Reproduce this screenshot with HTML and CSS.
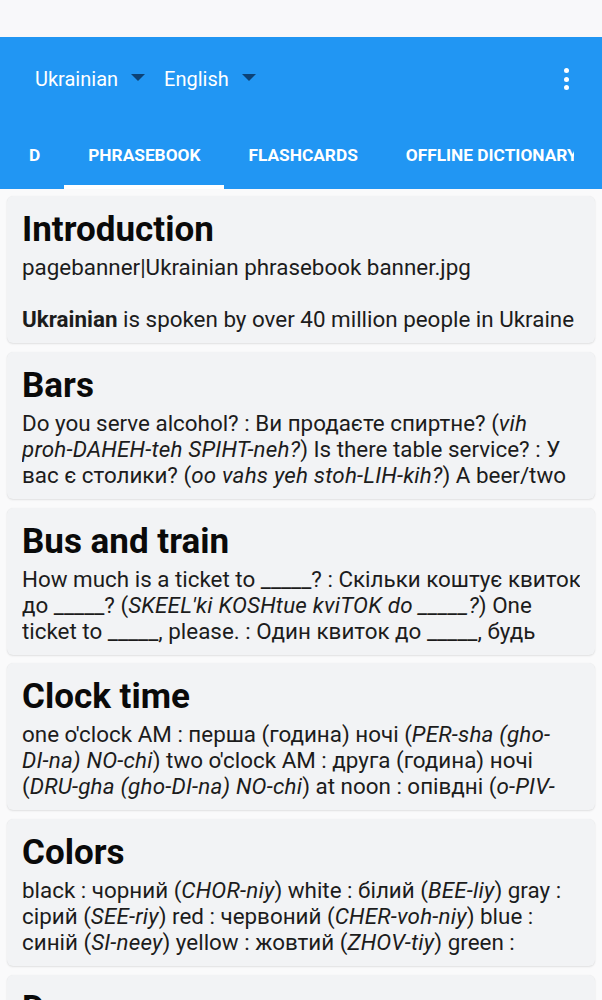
FILE: index.html
```html
<!DOCTYPE html>
<html lang="en">
<head>
<meta charset="utf-8">
<title>Ukrainian Phrasebook</title>
<link rel="stylesheet" href="styles.css">
</head>
<body>
<div class="status"></div>
<header class="appbar">
  <div class="toolbar">
    <div class="spinner"><span>Ukrainian</span><i class="caret"></i></div>
    <div class="spinner"><span>English</span><i class="caret"></i></div>
    <div class="grow"></div>
    <div class="overflow" aria-label="More options"><b></b><b></b><b></b></div>
  </div>
  <nav class="tabs">
    <div class="tab">D</div>
    <div class="tab active">PHRASEBOOK</div>
    <div class="tab">FLASHCARDS</div>
    <div class="tab">OFFLINE DICTIONARY</div>
  </nav>
</header>
<main class="list">
  <section class="card">
    <h2 class="title">Introduction</h2>
    <div class="body">pagebanner|Ukrainian phrasebook banner.jpg<br><br><b>Ukrainian</b> is spoken by over 40 million people in Ukraine<br>and by large communities around the world.</div>
  </section>
  <section class="card">
    <h2 class="title">Bars</h2>
    <div class="body">Do you serve alcohol? : Ви продаєте спиртне? (<i>vih</i><br><i>proh-DAHEH-teh SPIHT-neh?</i>) Is there table service? : У<br>вас є столики? (<i>oo vahs yeh stoh-LIH-kih?</i>) A beer/two<br>beers, please. : Пиво/два пива, будь ласка.</div>
  </section>
  <section class="card">
    <h2 class="title">Bus and train</h2>
    <div class="body">How much is a ticket to _____? : Скільки коштує квиток<br>до _____? (<i>SKEEL'ki KOSHtue kviTOK do _____?</i>) One<br>ticket to _____, please. : Один квиток до _____, будь<br>ласка. (<i>oDIN kviTOK do _____, bud' LASka</i>)</div>
  </section>
  <section class="card">
    <h2 class="title">Clock time</h2>
    <div class="body">one o'clock AM : перша (година) ночі (<i>PER-sha (gho-</i><br><i>DI-na) NO-chi</i>) two o'clock AM : друга (година) ночі<br>(<i>DRU-gha (gho-DI-na) NO-chi</i>) at noon : опівдні (<i>o-PIV-</i><br><i>dni</i>) one o'clock PM : перша (година) дня</div>
  </section>
  <section class="card">
    <h2 class="title">Colors</h2>
    <div class="body">black : чорний (<i>CHOR-niy</i>) white : білий (<i>BEE-liy</i>) gray :<br>сірий (<i>SEE-riy</i>) red : червоний (<i>CHER-voh-niy</i>) blue :<br>синій (<i>SI-neey</i>) yellow : жовтий (<i>ZHOV-tiy</i>) green :<br>зелений (<i>ze-LE-niy</i>) orange : помаранчевий</div>
  </section>
  <section class="card">
    <h2 class="title">Days</h2>
    <div class="body">Sunday : неділя (<i>ne-DEE-lya</i>) Monday : понеділок (<i>po-ne-DEE-lok</i>)</div>
  </section>
</main>
</body>
</html>
```

FILE: styles.css
```css
* { box-sizing: border-box; }
html, body {
  margin: 0;
  padding: 0;
  background: #fafafb;
  font-family: Roboto, "Noto Sans", "DejaVu Sans", sans-serif;
  color: #1c1c1c;
}
.status {
  height: 37px;
  background: #f8f8fa;
}
.appbar {
  background: #2196f3;
  color: #ffffff;
}
.toolbar {
  height: 82px;
  display: flex;
  align-items: center;
  padding: 2px 0 0 35px;
}
.spinner {
  display: flex;
  align-items: center;
  font-size: 20px;
  margin-right: 19px;
}
.caret {
  display: block;
  width: 0;
  height: 0;
  margin-left: 13px;
  border-left: 7px solid transparent;
  border-right: 7px solid transparent;
  border-top: 7px solid #0c4276;
  margin-top: -4px;
}
.grow { flex: 1; }
.overflow {
  width: 46px;
  display: flex;
  flex-direction: column;
  align-items: center;
  gap: 3.5px;
  margin-right: 13px;
}
.overflow b {
  display: block;
  width: 5px;
  height: 5px;
  border-radius: 50%;
  background: #ffffff;
}
.tabs {
  height: 70px;
  display: flex;
  padding-left: 5px;
  margin-right: 28px;
  overflow: hidden;
  white-space: nowrap;
}
.tab {
  flex: none;
  padding: 6px 24px 0;
  display: flex;
  align-items: center;
  font-size: 17.3px;
  font-weight: 700;
  border-bottom: 4px solid transparent;
}
.tab.active {
  border-bottom-color: #ffffff;
}
.list {
  padding: 7px;
}
.card {
  background: #f2f3f5;
  border-radius: 6px;
  box-shadow: 0 1px 2px rgba(0,0,0,0.10), 0 0 1px rgba(0,0,0,0.06);
  padding: 13px 15px 11px;
  margin-bottom: 8.75px;
}
.title {
  margin: 0 0 3px;
  font-size: 35px;
  line-height: 42px;
  font-weight: 700;
  color: #0a0a0a;
}
.body {
  font-size: 22.4px;
  line-height: 26px;
  height: 78px;
  overflow: hidden;
  white-space: nowrap;
}
.body i { letter-spacing: 0.2px; }
.body b { font-weight: 700; }
```
